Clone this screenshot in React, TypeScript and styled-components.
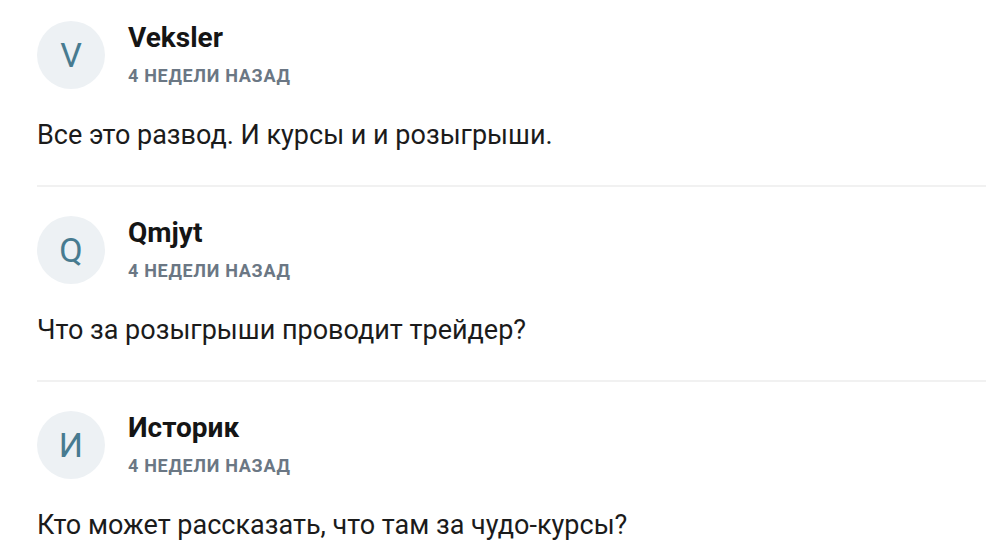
import * as React from "react";
import styled, { createGlobalStyle } from "styled-components";

const GlobalStyle = createGlobalStyle`
  html, body {
    margin: 0;
    padding: 0;
    background: #ffffff;
  }
  body {
    font-family: Roboto, "Liberation Sans", Arial, sans-serif;
    color: #1a1a1a;
  }
`;

const CommentList = styled.div`
  padding: 21px 0 0 37px;
  overflow: hidden;
`;

const CommentItem = styled.div`
  padding-bottom: 30px;
  margin-bottom: 29px;
  border-bottom: 2px solid #f1f1f1;

  &:last-child {
    border-bottom: none;
  }
`;

const Header = styled.div`
  display: flex;
  align-items: flex-start;
  gap: 23px;
`;

const Avatar = styled.div`
  width: 68px;
  height: 68px;
  flex: 0 0 68px;
  border-radius: 50%;
  background: #edf1f4;
  color: #477b90;
  display: flex;
  align-items: center;
  justify-content: center;
  font-size: 34px;
  font-weight: 400;
`;

const Meta = styled.div`
  display: flex;
  flex-direction: column;
  padding-top: 1px;
`;

const Author = styled.div`
  font-size: 28px;
  font-weight: 700;
  line-height: 32px;
  color: #151515;
`;

const Date = styled.div`
  margin-top: 11px;
  font-size: 18px;
  font-weight: 700;
  line-height: 22px;
  letter-spacing: 0.7px;
  text-transform: uppercase;
  color: #6b7784;
`;

const Body = styled.div`
  margin-top: 26px;
  font-size: 27px;
  line-height: 40px;
  color: #1b1b1b;
`;

interface CommentData {
  initial: string;
  author: string;
  date: string;
  text: string;
}

const comments: CommentData[] = [
  { initial: "V", author: "Veksler", date: "4 недели назад", text: "Все это развод. И курсы и и розыгрыши." },
  { initial: "Q", author: "Qmjyt", date: "4 недели назад", text: "Что за розыгрыши проводит трейдер?" },
  { initial: "И", author: "Историк", date: "4 недели назад", text: "Кто может рассказать, что там за чудо-курсы?" },
];

function Comment({ data }: { data: CommentData }) {
  return (
    <CommentItem>
      <Header>
        <Avatar>{data.initial}</Avatar>
        <Meta>
          <Author>{data.author}</Author>
          <Date>{data.date}</Date>
        </Meta>
      </Header>
      <Body>{data.text}</Body>
    </CommentItem>
  );
}

export default function App() {
  return (
    <>
      <GlobalStyle />
      <CommentList>
        {comments.map((c) => (
          <Comment key={c.author} data={c} />
        ))}
      </CommentList>
    </>
  );
}
